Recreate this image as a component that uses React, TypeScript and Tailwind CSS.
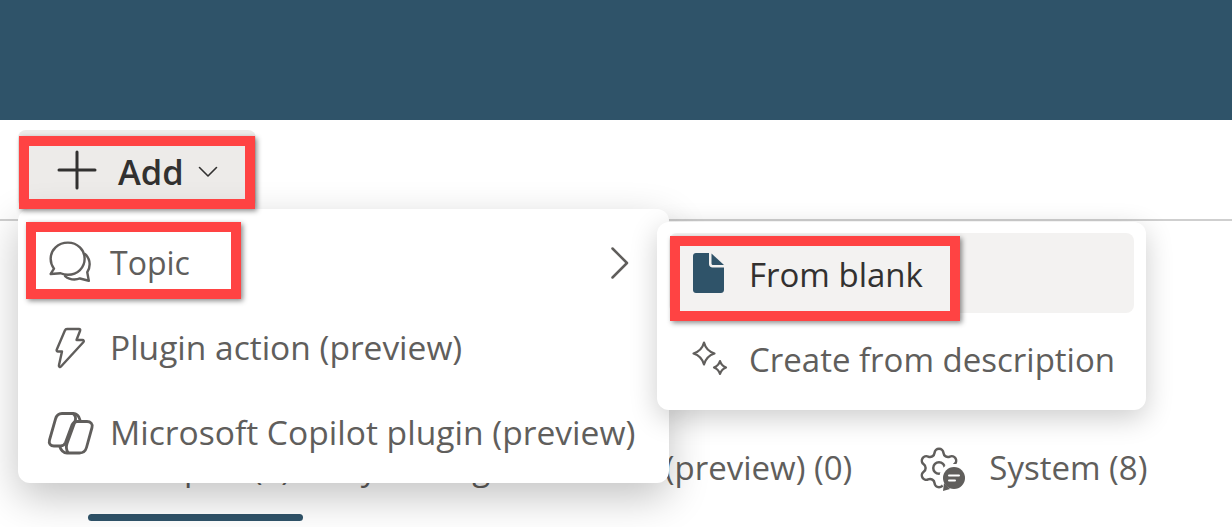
import { Settings } from 'lucide-react'

const font = { fontFamily: '"Open Sans", "Noto Sans", sans-serif' }

function ChatIcon({ size = 46 }: { size?: number }) {
  return (
    <svg width={size} height={size} viewBox="0 0 44 44" fill="none" stroke="#605e5c" strokeWidth="2.300" strokeLinejoin="round" strokeLinecap="round">
      <path d="M20 2.500C10.500 2.500 3.500 9.500 3.500 18c0 3.500 1.200 6.800 3.200 9.400L3.500 32.500l9.500-.7c2.200 1 4.500 1.500 7 1.500 9.300 0 16-6.800 16-15.300S29.300 2.500 20 2.500z" />
      <path d="M36.500 13.500c2.800 2.600 4.300 6 4.300 9.800 0 2.800-.8 5.300-2.300 7.500l1.500 8.200-8.500-2.200c-1.700.7-3.500 1-5.300 1-3.400 0-6.500-1.200-8.900-3.300" />
    </svg>
  )
}

function BoltIcon() {
  return (
    <svg width="34" height="44" viewBox="0 0 34 44" fill="none" stroke="#605e5c" strokeWidth="2.400" strokeLinejoin="round">
      <path d="M14 3h12c1 0 1.500.8 1.100 1.700L23.500 14h6c1.200 0 1.700 1.200 1 2L8 40.500c-1 1-2.300.2-2.100-1L9 25.500H5c-1 0-1.600-.9-1.300-1.800L12 4.300C12.300 3.500 13 3 14 3z" />
    </svg>
  )
}

function CopilotIcon() {
  return (
    <svg width="48" height="44" viewBox="0 0 48 44" fill="none" stroke="#605e5c" strokeWidth="2.800" strokeLinejoin="round" strokeLinecap="round">
      <path d="M33 9c-1-4-3.500-6.500-7-6.500H15C11.500 2.500 9.500 4.500 8.500 8l-6 21c-1 3.500 1 6 4.500 6h6.500c2.500 0 4-1 5-3.500L25 14c1-2 2.500-3.500 5-3.500h10c3.500 0 6 2.500 5 6l-5.500 20c-1 3.500-3.500 5.500-7 5.500H20c-3.500 0-6-2.500-7.500-7" />
      <path d="M26 2.500c3 2 3 5 2 8l-8 22c-1 3-1 6 1 9" />
    </svg>
  )
}

function SparkleIcon() {
  return (
    <svg width="38" height="38" viewBox="0 0 38 38" fill="none" stroke="#605e5c" strokeWidth="2.200" strokeLinejoin="round">
      <path d="M12 1.500c1.500 6 4.500 9 10.500 11-6 2-9 5-10.500 11-1.500-6-4.500-9-10.500-11 6-2 9-5 10.500-11z" />
      <path d="M28 20c.9 3.300 2.500 5 6 6.500-3.500 1.500-5.100 3.200-6 6.500-.9-3.300-2.500-5-6-6.500 3.500-1.500 5.100-3.200 6-6.500z" />
    </svg>
  )
}

function FileIcon() {
  return (
    <svg width="32" height="42" viewBox="0 0 32 42" fill="none">
      <path d="M3 1h13v11c0 2 1.500 3.500 3.500 3.500H31V38c0 2-1.500 3-3 3H3c-1.600 0-3-1-3-3V4c0-2 1.400-3 3-3z" fill="#2f5369" />
      <path d="M18.500 1.500 31 13H20c-1 0-1.500-.6-1.500-1.500z" fill="#2f5369" />
    </svg>
  )
}

function GearChatIcon() {
  return (
    <span className="relative block h-[44px] w-[46px]">
      <Settings size={46} strokeWidth={1.300} color="#605e5c" className="-ml-[3px] -mt-[3px]" />
      <svg width="28" height="28" viewBox="0 0 28 28" className="absolute bottom-[-3px] right-[-2px]">
        <circle cx="14" cy="13" r="13.500" fill="#fff" />
        <circle cx="15" cy="14" r="11" fill="#605e5c" />
        <path d="M4 27l1-8 6 6z" fill="#605e5c" />
        <path d="M10 11.500h10M10 16.500h6" stroke="#fff" strokeWidth="2" strokeLinecap="round" />
      </svg>
    </span>
  )
}

export default function App() {
  return (
    <div className="relative flex h-[527px] w-[1232px] flex-col overflow-hidden bg-white" style={font}>
      <div className="h-[120px] bg-[#2f5369]" />

      <div className="flex h-[101px] items-start border-b-2 border-[#cfcfcf] pl-[18px] pt-[10px]">
        <button className="flex h-[78px] w-[238px] items-center rounded-lg bg-[#edebe9] pl-[39px] pt-[6px] text-[#323130]">
          <svg width="40" height="40" viewBox="0 0 40 40" fill="none" stroke="currentColor" strokeWidth="3" strokeLinecap="round" className="shrink-0 -translate-y-[2px]">
            <path d="M20 2v36M2 20h36" />
          </svg>
          <span className="ml-[21px] text-[34.500px] font-semibold">Add</span>
          <svg width="20" height="12" viewBox="0 0 20 12" fill="none" stroke="currentColor" strokeWidth="1.600" strokeLinecap="round" strokeLinejoin="round" className="ml-[14px]">
            <path d="M1.500 1.500 10 10l8.500-8.500" />
          </svg>
        </button>
      </div>

      <div className="mt-[225px] flex h-[44px] items-center whitespace-nowrap pl-[104px] text-[33px] text-[#605e5c]">
        <span className="mb-[2px]"><ChatIcon size={28} /></span>
        <span className="ml-[14px]">Topics (0)</span>
        <span className="ml-[40px]">My settings</span>
        <span className="ml-[159px]">(preview) (0)</span>
        <span className="ml-[67px]"><GearChatIcon /></span>
        <span className="ml-[24px]">System (8)</span>
      </div>
      <div className="ml-[88px] mt-[24px] h-[7px] w-[215px] rounded-full bg-[#2f5369]" />

      {/* main dropdown */}
      <div className="absolute left-[18px] top-[209px] flex h-[274px] w-[651px] flex-col rounded-xl bg-white px-[29px] pt-[11px] text-[33.500px] text-[#605e5c] shadow-[0_14px_40px_rgba(0,0,0,0.24)]">
        <div className="flex h-[85px] items-center">
          <ChatIcon />
          <span className="ml-[17px] text-[32px]">Topic</span>
          <svg width="20" height="34" viewBox="0 0 20 34" fill="none" stroke="currentColor" strokeWidth="2.500" strokeLinecap="round" strokeLinejoin="round" className="ml-auto mr-[10px]">
            <path d="M2.500 2.500 17 17 2.500 31.500" />
          </svg>
        </div>
        <div className="flex h-[85px] items-center">
          <span className="ml-[6px]"><BoltIcon /></span>
          <span className="ml-[23px]">Plugin action (preview)</span>
        </div>
        <div className="flex h-[85px] items-center">
          <span><CopilotIcon /></span>
          <span className="ml-[15px] whitespace-nowrap text-[33.600px]">Microsoft Copilot plugin (preview)</span>
        </div>
      </div>

      {/* submenu */}
      <div className="absolute left-[657px] top-[222px] flex h-[188px] w-[489px] flex-col rounded-xl bg-white px-[12px] pt-[11px] text-[33px] text-[#605e5c] shadow-[0_8px_28px_rgba(0,0,0,0.2)]">
        <div className="flex h-[80px] items-center rounded-lg bg-[#f3f2f1] pl-[24px] text-[#323130]">
          <FileIcon />
          <span className="ml-[24px] mt-[4px]">From blank</span>
        </div>
        <div className="mt-[7px] flex h-[80px] items-center pl-[23px]">
          <SparkleIcon />
          <span className="ml-[19px] whitespace-nowrap">Create from description</span>
        </div>
      </div>

      {/* red callouts */}
      <div className="absolute left-[19px] top-[136px] h-[73px] w-[236px] border-[10px] border-[#ff4343] shadow-[2px_2px_5px_rgba(0,0,0,0.45)]" />
      <div className="absolute left-[26px] top-[222px] h-[77px] w-[215px] border-[10px] border-[#ff4343] shadow-[2px_2px_5px_rgba(0,0,0,0.45)]" />
      <div className="absolute left-[670px] top-[236px] h-[85px] w-[290px] border-[10px] border-[#ff4343] shadow-[2px_2px_5px_rgba(0,0,0,0.45)]" />
    </div>
  )
}
